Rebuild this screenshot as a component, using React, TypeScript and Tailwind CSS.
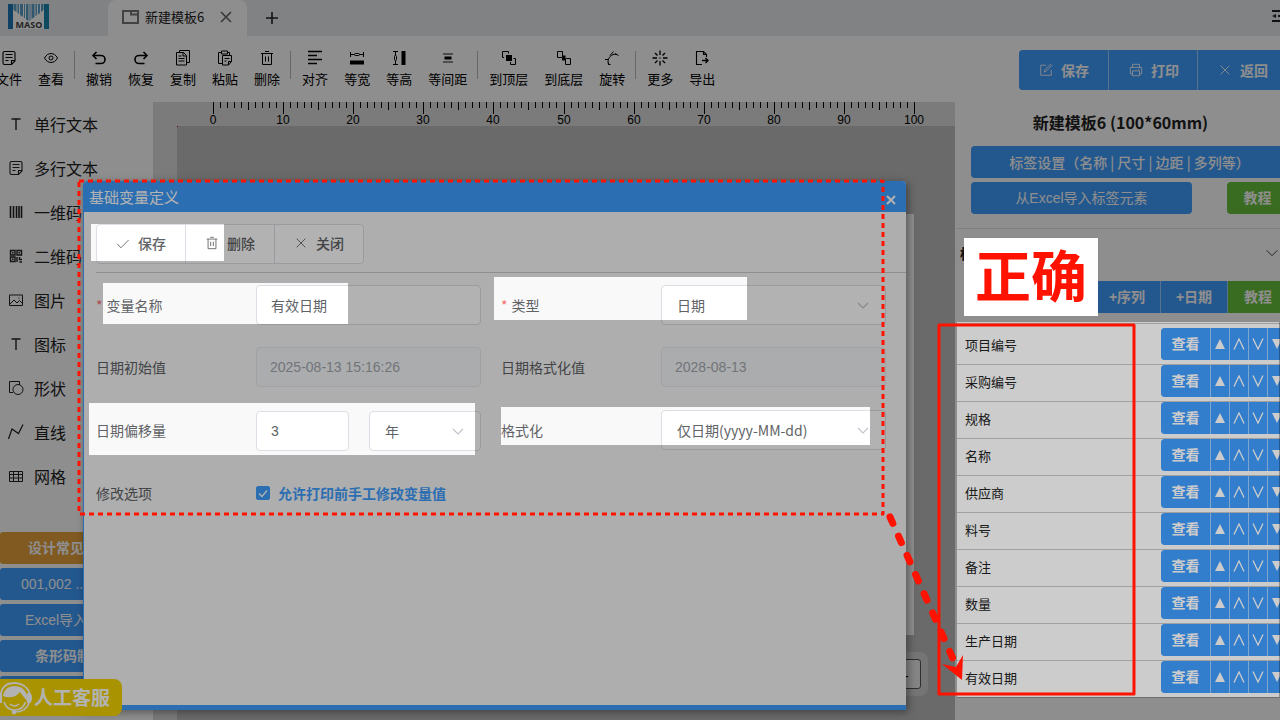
import React, { useState } from 'react';

const UI = "font-['Noto_Sans_CJK_SC','Noto_Sans',sans-serif]";
const ARIAL = "font-['Liberation_Sans','Noto_Sans_CJK_SC',sans-serif]";

interface IconProps {
  className?: string;
  sw?: number;
  children: React.ReactNode;
}

// 16x16 line icon shared by the toolbar, the sidebar and the buttons
const Icon: React.FC<IconProps> = ({ className = 'size-4', sw = 1, children }) => (
  <svg viewBox="0 0 16 16" className={`${className} shrink-0`} fill="none" stroke="currentColor" strokeWidth={sw} aria-hidden="true">
    {children}
  </svg>
);

const NoteShape = () => (
  <>
    <path d="M3.5 1.5h9a1.500 1.500 0 0 1 1.500 1.500V11L10.500 14.500H3.500A1.500 1.500 0 0 1 2 13V3A1.500 1.500 0 0 1 3.500 1.500z" strokeWidth={1.1} />
    <path d="M14 10.500h-3.500v4M4.500 4.500h7M4.500 7.500h7M4.500 10.500h3" strokeWidth={1.1} />
  </>
);
const TrashShape = () => (
  <path d="M2 3.500h12M6 1.500h4M3.500 3.500V14.500h9V3.500M6.500 6.500v5M9.500 6.500v5" />
);
const CloseShape = () => <path d="M3 3l10 10M13 3L3 13" />;

type Tool = { label: string; icon?: React.ReactNode; sep?: boolean };

const tools: Tool[] = [
  { label: '文件', icon: <NoteShape /> },
  { label: '查看', icon: <><path d="M1.500 8C3 5 5.500 3.500 8 3.500S13 5 14.500 8C13 11 10.500 12.500 8 12.500S3 11 1.500 8z" /><circle cx="8" cy="8" r="2" /></> },
  { label: 's1', sep: true },
  { label: '撤销', icon: <><path d="M2.500 5.500H10a4 4 0 0 1 0 8H4.500" strokeWidth={1.6} /><path d="M5.500 2L2 5.500 5.500 9" strokeWidth={1.6} /></> },
  { label: '恢复', icon: <><path d="M13.500 5.500H6a4 4 0 0 0 0 8h5.500" strokeWidth={1.6} /><path d="M10.500 2L14 5.500 10.500 9" strokeWidth={1.6} /></> },
  { label: '复制', icon: <path d="M4.500 2.500V.5h10v12h-3M1.500 2.500h7l3 3v9.500h-10zM8 2.500V6h3.500M3.500 6h3M3.500 8.500h6M3.500 11h6" /> },
  { label: '粘贴', icon: <path d="M4.500 2.500h-3v11h4M10.500 2.500h2v3M4.500 1h6v3h-6zM5.500 5.500h9v6l-3 3.500h-6zM14.500 11.500h-3V15M7.500 8.500h5M7.500 11h2" /> },
  { label: '删除', icon: <TrashShape /> },
  { label: 's2', sep: true },
  { label: '对齐', icon: <path d="M1 1.500h14M1 5.500h9M1 9.500h14M1 13.500h9" strokeWidth={1.4} /> },
  { label: '等宽', icon: <><path d="M1.500 2v5M14.500 2v5M2 4.500h3M11 4.500h3M5 4.500l1.500-1h3l1.500 1-1.500 1h-3z" /><path d="M1 10.500h14v4H1z" fill="currentColor" stroke="none" /></> },
  { label: '等高', icon: <><path d="M2 1.500h5M2 14.500h5M4.500 2v3M4.500 11v3M4.500 5l1 1.500v3l-1 1.500-1-1.500v-3z" /><path d="M10.500 1h4v14h-4z" fill="currentColor" stroke="none" /></> },
  { label: '等间距', icon: <><path d="M3 4h10M3 12h10" strokeWidth={1.500} opacity={0.6} /><path d="M4.500 8h7" strokeWidth={3} /></> },
  { label: 's3', sep: true },
  { label: '到顶层', icon: <><path d="M1.500 7.500v-6h6v2M3 7.500H1.500M9.500 12v2.500h5v-6h-2" /><path d="M5 5h6v6H5z" fill="currentColor" stroke="none" /></> },
  { label: '到底层', icon: <><path d="M1.500 1.500h5v6h-5zM9.500 8.500h5v6h-5z" /><path d="M7 5.500h2.500V8H7zM6 8h3v2.500H6z" fill="currentColor" stroke="none" /></> },
  { label: '旋转', icon: <><path d="M1 9.500h3.500M4.500 14.500C2.500 9 7 3 13 4.500M6.500 14.500h-2v-2" /><path d="M9.500 1.500L6 5.500M11 3.500l3.500 2" /></> },
  { label: 's4', sep: true },
  { label: '更多', icon: <path d="M8 .5v4.500M8 11v4.500M.5 8H5M11 8h4.500M3 3l2.500 2.500M13 3l-2.500 2.500M3 13l2.500-2.500M13 13l-2.500-2.500M7.500 8h1" strokeWidth={1.3} /> },
  { label: '导出', icon: <><path d="M8 14.500H2.500V1.500h7l3 3v2.500M9.500 1.500v3h3" strokeWidth={1.100} /><path d="M8 10.500h6M11.500 8l2.500 2.500-2.500 2.500" strokeWidth={1.400} /></> },
];

const elements: Tool[] = [
  { label: '单行文本', icon: <path d="M3.500 3h9M8 3v11" strokeWidth={1.400} /> },
  { label: '多行文本', icon: <NoteShape /> },
  { label: '一维码', icon: <path d="M2.500 2v12M5.500 2v12M8.500 2v12M11 2v12M13.500 2v12" strokeWidth={1.600} /> },
  { label: '二维码', icon: <path d="M2.500 2.500h4.500v4.500H2.500zM9 2.500h4.500v4.500H9zM2.500 9h4.500v4.500H2.500zM9 9v5M11.500 9v2.500h2.500M11.500 14h2.500M4 4.800h1.500M10.500 4.800H12M4 11.300h1.500" strokeWidth={1.400} /> },
  { label: '图片', icon: <path d="M1.500 3h13v10.500h-13zM2 12l4-4 3 3 2.500-2.500 3 3M10.500 6h1" /> },
  { label: '图标', icon: <path d="M3.500 3h9M8 3v11" strokeWidth={1.400} /> },
  { label: '形状', icon: <><path d="M5 12.500H1.500v-11h10V5" /><circle cx="10" cy="9.500" r="5" /></> },
  { label: '直线', icon: <path d="M.5 15L4 5l6.500 4.500L15 .5" strokeWidth={1.200} /> },
  { label: '网格', icon: <path d="M1.500 3.500h13v10h-13zM1.500 6.500h13M1.500 10h13M5.500 3.500v10M10.500 3.500v10" /> },
];

const helpLinks = [
  { label: '设计常见问题', color: 'bg-[#e6a23c] font-bold' },
  { label: '001,002 ... 递增', color: 'bg-[#409eff]' },
  { label: 'Excel导入数据', color: 'bg-[#409eff]' },
  { label: '条形码制作', color: 'bg-[#409eff] font-bold' },
];

const variables = ['项目编号', '采购编号', '规格', '名称', '供应商', '料号', '备注', '数量', '生产日期', '有效日期'];

const Logo = () => (
  <svg viewBox="0 0 41 25" className="h-[25px] w-[41px] shrink-0" role="img" aria-label="MASO">
    <rect width="41" height="25" fill="#fff" />
    <rect width="5" height="25" fill="#1b76b5" />
    <rect x="36" width="5" height="25" fill="#1b86ad" />
    <path d="M5.500 0h3v8l-3-2zM9.500 0H11v10l-1.500-1zM12 0h3v13l-3-2zM16 0h1v14h-1zM18 0h2.500v17L18 15.500zM21.500 0h1v16l-1 1zM23.500 0h3v13l-3 2zM27.500 0H29v11l-1.500 1zM30 0h2v9l-2 1.500zM33 0h2.500v6L33 8z" fill="#2e86b8" opacity="0.8" />
    <text x="21" y="24" textAnchor="middle" fontSize="9" fontWeight="700" fill="#444" fontFamily="Noto Sans">MASO</text>
  </svg>
);

const TabBar = () => (
  <div className="flex h-9 shrink-0 items-stretch bg-[#e8eaed] pl-2">
    <div className="w-[100px] pt-1"><Logo /></div>
    <div className="flex w-[139px] items-center rounded-t-lg bg-white pb-[2px] pl-[14px] text-[13px] text-[#222]">
      <svg viewBox="0 0 17 14" className="mr-[6px] h-[14px] w-[17px]" fill="none" stroke="#777" strokeWidth="2" aria-hidden="true">
        <path d="M1 1h15v12H1zM9 1v3.500h7" />
      </svg>
      <span>新建模板6</span>
      <button aria-label="关闭标签" className="ml-4 text-[#666]">
        <svg viewBox="0 0 12 12" className="size-3" stroke="currentColor" strokeWidth="1.600"><path d="M1 1l10 10M11 1L1 11" /></svg>
      </button>
    </div>
    <button aria-label="新建" className="ml-[19px] text-[#222]">
      <svg viewBox="0 0 12 12" className="size-3" stroke="currentColor" strokeWidth="1.600"><path d="M6 0v12M0 6h12" /></svg>
    </button>
    <button aria-label="菜单" className="-mr-2 mb-1 ml-auto text-[#222]">
      <svg viewBox="0 0 16 12" className="h-3 w-4" stroke="currentColor" strokeWidth="2"><path d="M0 1h16M6 6h10M0 11h16" /><path d="M0 6l4-2v4z" fill="currentColor" stroke="none" /></svg>
    </button>
  </div>
);

const Toolbar = () => (
  <div className="flex h-[66px] shrink-0 items-start justify-between bg-white">
    <div className="-ml-3 flex items-center pt-3">
      {tools.map((t) => t.sep ? (
        <div key={t.label} className="flex h-9 w-[6px] justify-start pl-[2px]"><div className="h-7 w-px bg-[#bbb]" /></div>
      ) : (
        <button key={t.label} className="flex flex-col items-center gap-[3px] px-2 text-[13px] leading-5 text-black">
          <span className="mt-[2px]"><Icon>{t.icon}</Icon></span>
          {t.label}
        </button>
      ))}
    </div>
    <div className="-mr-2 mt-[14px] flex gap-px overflow-hidden rounded bg-[#a0cfff] text-sm font-bold text-white">
      <button className="flex h-10 items-center gap-2 bg-[#409eff] pl-5 pr-[19px] pb-px"><Icon className="size-[14px]"><path d="M8 2.500H2v11.500h12V8M6 10.500l1-3 6-6 1.500 1.500-6 6z" /></Icon>保存</button>
      <button className="flex h-10 items-center gap-2 bg-[#409eff] pl-5 pr-[18px] pb-px"><Icon className="size-[14px]"><path d="M4 5V1.500h8V5M4 12.500H1.500V5h13v7.500H12M4 9h8v5.500H4zM10.500 7H12" /></Icon>打印</button>
      <button className="flex h-10 items-center gap-2 bg-[#409eff] px-5 pb-px"><Icon className="size-[14px]"><CloseShape /></Icon>返回</button>
    </div>
  </div>
);

const Sidebar = () => (
  <aside className="flex w-[153px] shrink-0 flex-col overflow-hidden bg-white">
    <div>
      {elements.map((e) => (
        <button key={e.label} className="flex h-11 w-full items-center gap-[10px] pl-2 text-base text-[#222]">
          <Icon>{e.icon}</Icon>{e.label}
        </button>
      ))}
    </div>
    <div className={`mt-[34px] flex w-[140px] shrink-0 flex-col gap-1 ${ARIAL}`}>
      {helpLinks.map((l) => (
        <button key={l.label} className={`h-8 rounded-[3px] text-sm text-white ${l.color}`}>{l.label}</button>
      ))}
      <button aria-label="更多帮助" className="h-8 rounded-[3px] bg-[#409eff]" />
    </div>
  </aside>
);

const Ruler = () => (
  <svg className="block h-6 w-full overflow-hidden" fill="#000" shapeRendering="crispEdges">
    {Array.from({ length: 101 }, (_, i) => (
      <rect key={i} x={Math.round(60 + i * 7.01)} y={0} width={1} height={i % 10 === 0 ? 12 : i % 5 === 0 ? 8 : 6} />
    ))}
    {Array.from({ length: 11 }, (_, i) => (
      <text key={i} x={Math.round(60 + i * 70.1)} y={22} fontSize={12} textAnchor="middle" fontFamily="Liberation Sans">{i * 10}</text>
    ))}
  </svg>
);

const Workspace = () => (
  <main className="flex min-w-0 flex-1 flex-col bg-[#dcdcdc]">
    <Ruler />
    <div className="relative ml-6 flex-1 bg-[#bfbfbf] pl-9 pt-[88px]">
      <div className="absolute left-0 top-0 size-px bg-red-600" />
      <div className="h-[421px] w-[701px] bg-white" />
      <div className="absolute bottom-6 right-[27px] flex w-40 justify-end rounded-lg bg-[#d2d2d2] p-[7px]">
        <button className="h-[30px] w-[30px] rounded-[3px] border border-[#555] bg-[#eee] text-base leading-none text-black">-</button>
      </div>
    </div>
  </main>
);

const RightPanel = () => (
  <aside className="flex w-[325px] shrink-0 flex-col overflow-hidden bg-white text-sm">
    <h1 className="mt-2 pl-[6px] text-center text-base leading-6 font-bold text-[#222]">新建模板6 (100*60mm)</h1>
    <div className={`-mr-2 mt-3 flex flex-col gap-1 pl-4 text-white ${ARIAL}`}>
      <button className="h-8 rounded bg-[#409eff] font-['Noto_Sans_CJK_SC',sans-serif] font-medium">标签设置（名称 | 尺寸 | 边距 | 多列等）</button>
      <div className="flex justify-between">
        <button className="h-8 w-[221px] rounded bg-[#409eff]">从Excel导入标签元素</button>
        <button className="h-8 w-[61px] rounded bg-[#67c23a] font-bold">教程</button>
      </div>
    </div>
    <div className="mt-[14px] ml-[2px] flex h-[48px] items-center justify-between border-t border-[#e4e4e4] pl-[3px] pr-px font-bold text-[#222]">
      <span>标</span>
      <Icon className="size-[14px]"><path d="M2 5l6 6 6-6" /></Icon>
    </div>
    <div className={`mt-[5px] -mr-2 flex justify-end text-white ${ARIAL}`}>
      <div className="flex gap-px bg-[#a0cfff]">
        <button aria-label="+变量" className="h-8 w-[66px] bg-[#409eff]" />
        <button className="h-8 w-[66px] bg-[#409eff] font-bold">+序列</button>
        <button className="h-8 w-[66px] bg-[#409eff] font-bold">+日期</button>
        <button className="h-8 w-[60px] bg-[#67c23a] font-bold">教程</button>
      </div>
    </div>
    <ul className="ml-[2px] mt-[10px] border-t border-[#c8c8c8] pt-1">
      {variables.map((v) => (
        <li key={v} className="flex h-[37px] items-start border-b border-[#c8c8c8] pl-2">
          <span className="w-[196px] shrink-0 pt-[7px] text-[13px] leading-5 text-[#222]">{v}</span>
          <div className={`flex shrink-0 gap-px overflow-hidden rounded-l bg-[#a0cfff] text-white ${ARIAL}`}>
            <button className="h-8 w-[49px] bg-[#409eff] text-sm font-bold">查看</button>
            <button aria-label="置顶" className="flex h-8 w-[18px] items-center justify-center bg-[#409eff]"><svg viewBox="0 0 10 10" className="size-[10px]" fill="currentColor"><path d="M5 0l5 10H0z" /></svg></button>
            <button aria-label="上移" className="flex h-8 w-[18px] items-center justify-center bg-[#409eff]"><svg viewBox="0 0 12 12" className="size-3" fill="none" stroke="currentColor" strokeWidth="1.300"><path d="M1 11.500L6 1l5 10.500" /></svg></button>
            <button aria-label="下移" className="flex h-8 w-[18px] items-center justify-center bg-[#409eff]"><svg viewBox="0 0 12 12" className="size-3" fill="none" stroke="currentColor" strokeWidth="1.300"><path d="M1 .5L6 11 11 .5" /></svg></button>
            <button aria-label="置底" className="flex h-8 w-[18px] items-center justify-center bg-[#409eff]"><svg viewBox="0 0 10 10" className="size-[10px]" fill="currentColor"><path d="M5 10l5-10H0z" /></svg></button>
          </div>
        </li>
      ))}
    </ul>
  </aside>
);

const inputClass = "h-10 w-full rounded border border-[#dcdfe6] bg-white pl-[14px] text-sm text-[#606266]";
const disabledClass = "h-10 w-full rounded border border-[#e4e7ed] bg-[#f5f7fa] pl-[13px] text-sm text-[#a3a7ae]";

const SelectBox: React.FC<{ id: string; label?: string; options: string[] }> = ({ id, label, options }) => (
  <div className="relative w-full">
    <select id={id} aria-label={label} className="h-10 w-full appearance-none rounded border border-[#dcdfe6] bg-white pl-[15px] text-sm text-[#606266]">
      {options.map((o) => <option key={o}>{o}</option>)}
    </select>
    <svg viewBox="0 0 12 8" className="pointer-events-none absolute right-[17px] top-[17px] h-2 w-3" fill="none" stroke="#c0c4cc" strokeWidth="1.200"><path d="M1 1l5 5 5-5" /></svg>
  </div>
);

const VariableDialog = () => {
  const [name, setName] = useState('有效日期');
  const [offset, setOffset] = useState('3');
  const [allowEdit, setAllowEdit] = useState(true);

  return (
    <section role="dialog" aria-labelledby="dialog-title" className="absolute left-[83px] top-[181px] flex h-[529px] w-[823px] flex-col overflow-hidden rounded-t-sm border-b-[5px] border-l border-[#409eff] bg-[#f9f9f9] text-sm text-[#606266] shadow-[2px_2px_8px_rgba(0,0,0,0.4)]">
      <header className="flex h-[31px] shrink-0 items-center justify-between bg-[#409eff] pl-[5px] pr-[10px] text-white">
        <h2 id="dialog-title" className="text-[15px] leading-6">基础变量定义</h2>
        <button aria-label="关闭" className="mt-[6px]"><svg viewBox="0 0 10 10" className="size-[10px]" stroke="currentColor" strokeWidth="2"><path d="M1 1l8 8M9 1L1 9" /></svg></button>
      </header>
      <div className="ml-3 border-b border-[#ccc] pb-[8px] pt-3">
        <div className="flex w-[268px] divide-x divide-[#dcdfe6] rounded border border-[#dcdfe6] bg-white font-medium">
          <button className="flex h-[38px] flex-1 items-center justify-center gap-2 pb-[2px]"><Icon className="size-[14px]"><path d="M1.500 9l4 4.500 9-9" /></Icon>保存</button>
          <button className="flex h-[38px] flex-1 items-center justify-center gap-2 pb-[2px]"><Icon className="size-[14px]"><TrashShape /></Icon>删除</button>
          <button className="flex h-[38px] flex-1 items-center justify-center gap-2 pb-[2px]"><Icon className="size-[14px]"><CloseShape /></Icon>关闭</button>
        </div>
      </div>
      <form className="ml-3 mt-3 grid grid-cols-[160px_225px_180px_225px] items-center gap-y-[22px]">
        <label htmlFor="name"><span className="mr-1 text-[#f56c6c]">*</span>变量名称</label>
        <input id="name" className={inputClass} value={name} onChange={(e) => setName(e.target.value)} />
        <label htmlFor="type" className="pl-5"><span className="mr-1 text-[#f56c6c]">*</span>类型</label>
        <SelectBox id="type" options={['日期', '文本', '序列']} />

        <label htmlFor="initial">日期初始值</label>
        <input id="initial" disabled className={`${disabledClass} ${ARIAL}`} defaultValue="2025-08-13 15:16:26" />
        <label htmlFor="formatted" className="pl-5">日期格式化值</label>
        <input id="formatted" disabled className={`${disabledClass} ${ARIAL}`} defaultValue="2028-08-13" />

        <label htmlFor="offset">日期偏移量</label>
        <div className="grid grid-cols-[93px_112px] gap-5 pt-[2px]">
          <input id="offset" className={`${inputClass} ${ARIAL}`} value={offset} onChange={(e) => setOffset(e.target.value)} />
          <SelectBox id="unit" label="单位" options={['年', '月', '日']} />
        </div>
        <label htmlFor="format" className="pl-5">格式化</label>
        <SelectBox id="format" options={['仅日期(yyyy-MM-dd)', '日期时间']} />

        <span className="leading-10">修改选项</span>
        <label className="col-span-3 flex items-center gap-2 font-bold text-[#409eff]">
          <span className="relative size-[14px]">
            <input type="checkbox" checked={allowEdit} onChange={() => setAllowEdit(!allowEdit)} className="block size-[14px] appearance-none rounded-xs border border-[#409eff] checked:bg-[#409eff]" />
            <svg viewBox="0 0 14 14" className="pointer-events-none absolute inset-0" fill="none" stroke="#fff" strokeWidth="1.300"><path d="M3 7.500l3 3 5-6" /></svg>
          </span>
          允许打印前手工修改变量值
        </label>
      </form>
    </section>
  );
};

const ServiceBadge = () => (
  <button className="absolute bottom-1 left-0 flex h-[37px] w-[122px] items-center rounded-r-lg bg-[#f3d300] text-[19px] font-bold text-white">
    <svg viewBox="0 0 34 34" className="h-[34px] w-[34px]" fill="none" stroke="#fff" aria-hidden="true">
      <path d="M1 14C1 6 7 2 14.500 2S29 7 30 14" strokeWidth="1.800" />
      <path d="M3 15C4 9 8 5 14.500 5S26 9 27 15v5l-4-5-3-4c-4 5-9 6-14 5z" fill="#fff" stroke="none" />
      <path d="M27 12h3q2 1 2 5t-2 5h-3zM0 12h2v10H0z" fill="#fff" stroke="none" />
      <path d="M4 21c2 6 6 8 10.500 8s9-2 11-8M10 23q5 4 9 0M29 22c-2 6-7 9-14 9" strokeWidth="1.600" />
      <circle cx="14" cy="31" r="2" fill="#fff" />
    </svg>
    人工客服
  </button>
);

// Darkens everything except the fields being explained
const Spotlight = () => (
  <svg className="pointer-events-none absolute inset-0 h-full w-full" aria-hidden="true">
    <path
      fill="#000"
      fillOpacity="0.3"
      fillRule="evenodd"
      d="M0 0H4000V4000H0z M91 224H224V261H91z M103 283H348V324H103z M494 277H747V320H494z M89 403H475V455H89z M501 407H870V445H501z M957 322H1279V697H957z"
    />
    <g fill="none" stroke="#ff1200" strokeWidth="3">
      <path d="M79 181H883V514H79z" strokeDasharray="5 4" strokeLinejoin="round" />
      <path d="M939 325H1134V694H939z" strokeLinejoin="round" />
      <path d="M890 517L954 661" strokeWidth="7" strokeLinecap="round" strokeDasharray="7 14" />
      <path d="M963 655L962 680L942 664L956 667z" fill="#ff1200" stroke="none" />
    </g>
  </svg>
);

const App: React.FC = () => (
  <div className={`relative flex h-screen min-h-[720px] w-full flex-col overflow-hidden bg-white ${UI}`}>
    <TabBar />
    <Toolbar />
    <div className="flex min-h-0 flex-1">
      <Sidebar />
      <Workspace />
      <RightPanel />
    </div>
    <div className="absolute inset-0 bg-black/20" />
    <VariableDialog />
    <ServiceBadge />
    <Spotlight />
    <div className="absolute left-[964px] top-[238px] flex h-[78px] w-[134px] items-center justify-center bg-white pb-2 text-[56px] leading-none font-bold text-[#ff1200]">正确</div>
  </div>
);

export default App;
